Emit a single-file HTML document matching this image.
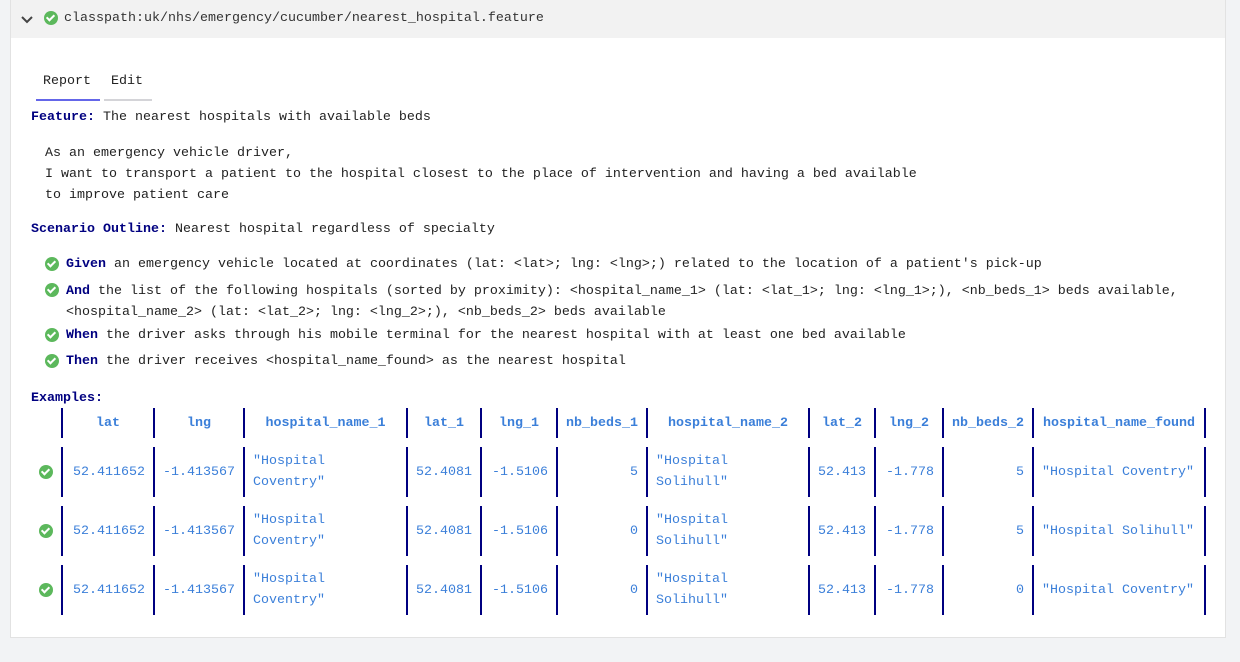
<!DOCTYPE html>
<html><head><style>
body{margin:0;background:#f2f3f5;font-family:"Liberation Mono",monospace;font-size:13.33px;color:#222;}
.card{position:absolute;left:10px;top:0;width:1214px;height:637px;background:#fff;border:1px solid #e2e2e2;border-top:none;}
.hdr{position:absolute;left:0;top:0;width:1214px;height:38px;background:#f2f2f2;}
.a{position:absolute;white-space:pre;line-height:20px;}
.k{color:#000080;font-weight:bold;}
.chk{position:absolute;width:14px;height:14px;border-radius:50%;background:#5cb85c;}
.chk:after{content:"";position:absolute;left:4px;top:2px;width:3px;height:6px;border:solid #fff;border-width:0 2px 2px 0;transform:rotate(45deg);}
table{position:absolute;left:20px;top:399px;border-collapse:separate;border-spacing:0 9px;color:#3b7fd9;}
td{height:50px;border-left:2px solid #000080;padding:0 8px;box-sizing:border-box;line-height:21px;vertical-align:middle;}
tr.h td{height:30px;text-align:center;font-weight:bold;}
td.i{border-left:none;padding:0;text-align:center;}
td.i .chk{position:relative;display:inline-block;vertical-align:middle;top:1px;}
td.r{text-align:right;}
td.last{border-right:2px solid #000080;}
</style></head><body>
<div class="card">
<div class="hdr">
<svg style="position:absolute;left:9px;top:15px" width="14" height="10"><path d="M2 2 L7 7 L12 2" stroke="#444" stroke-width="2" fill="none"/></svg>
<div class="chk" style="left:33px;top:11px"></div>
<div class="a" style="left:53px;top:9px;color:#333">classpath:uk/nhs/emergency/cucumber/nearest_hospital.feature</div>
</div>
<div class="a" style="left:32px;top:72px">Report</div>
<div class="a" style="left:100px;top:72px">Edit</div>
<div style="position:absolute;left:25px;top:99px;width:64px;height:2px;background:#6466e9"></div>
<div style="position:absolute;left:93px;top:99px;width:48px;height:2px;background:#d4d4d8"></div>
<div class="a" style="left:20px;top:108px"><span class="k">Feature:</span> The nearest hospitals with available beds</div>
<div class="a" style="left:34px;top:143px;line-height:21px">As an emergency vehicle driver,
I want to transport a patient to the hospital closest to the place of intervention and having a bed available
to improve patient care</div>
<div class="a" style="left:20px;top:220px"><span class="k">Scenario Outline:</span> Nearest hospital regardless of specialty</div>
<div class="chk" style="left:34px;top:257px"></div>
<div class="a" style="left:55px;top:255px"><span class="k">Given</span> an emergency vehicle located at coordinates (lat: &lt;lat&gt;; lng: &lt;lng&gt;;) related to the location of a patient's pick-up</div>
<div class="chk" style="left:34px;top:283px"></div>
<div class="a" style="left:55px;top:281px;line-height:21px"><span class="k">And</span> the list of the following hospitals (sorted by proximity): &lt;hospital_name_1&gt; (lat: &lt;lat_1&gt;; lng: &lt;lng_1&gt;;), &lt;nb_beds_1&gt; beds available,
&lt;hospital_name_2&gt; (lat: &lt;lat_2&gt;; lng: &lt;lng_2&gt;;), &lt;nb_beds_2&gt; beds available</div>
<div class="chk" style="left:34px;top:328px"></div>
<div class="a" style="left:55px;top:326px"><span class="k">When</span> the driver asks through his mobile terminal for the nearest hospital with at least one bed available</div>
<div class="chk" style="left:34px;top:354px"></div>
<div class="a" style="left:55px;top:352px"><span class="k">Then</span> the driver receives &lt;hospital_name_found&gt; as the nearest hospital</div>
<div class="a" style="left:20px;top:389px"><span class="k">Examples:</span></div>
<table>
<colgroup><col style="width:30px"><col style="width:92px"><col style="width:90px"><col style="width:163px"><col style="width:74px"><col style="width:76px"><col style="width:90px"><col style="width:162px"><col style="width:66px"><col style="width:68px"><col style="width:90px"><col style="width:174px"></colgroup>
<tr class="h"><td class="i"></td><td>lat</td><td>lng</td><td>hospital_name_1</td><td>lat_1</td><td>lng_1</td><td>nb_beds_1</td><td>hospital_name_2</td><td>lat_2</td><td>lng_2</td><td>nb_beds_2</td><td class="last">hospital_name_found</td></tr>
<tr><td class="i"><div class="chk"></div></td><td class="r">52.411652</td><td class="r">-1.413567</td><td>"Hospital<br>Coventry"</td><td class="r">52.4081</td><td class="r">-1.5106</td><td class="r">5</td><td>"Hospital<br>Solihull"</td><td class="r">52.413</td><td class="r">-1.778</td><td class="r">5</td><td class="last">"Hospital Coventry"</td></tr>
<tr><td class="i"><div class="chk"></div></td><td class="r">52.411652</td><td class="r">-1.413567</td><td>"Hospital<br>Coventry"</td><td class="r">52.4081</td><td class="r">-1.5106</td><td class="r">0</td><td>"Hospital<br>Solihull"</td><td class="r">52.413</td><td class="r">-1.778</td><td class="r">5</td><td class="last">"Hospital Solihull"</td></tr>
<tr><td class="i"><div class="chk"></div></td><td class="r">52.411652</td><td class="r">-1.413567</td><td>"Hospital<br>Coventry"</td><td class="r">52.4081</td><td class="r">-1.5106</td><td class="r">0</td><td>"Hospital<br>Solihull"</td><td class="r">52.413</td><td class="r">-1.778</td><td class="r">0</td><td class="last">"Hospital Coventry"</td></tr>
</table>
</div>
</body></html>
